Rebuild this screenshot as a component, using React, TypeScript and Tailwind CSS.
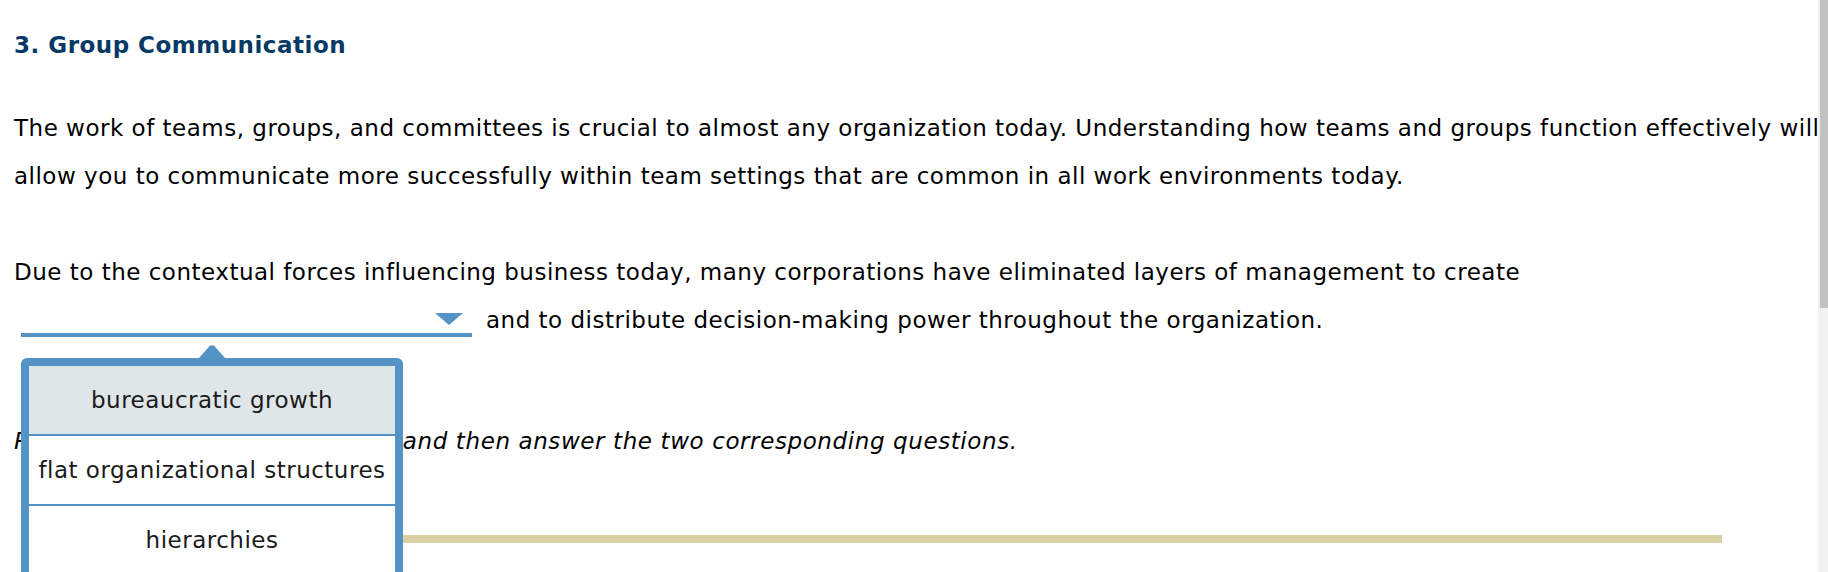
const BLUE = '#5393c5';

const OPTIONS = ['bureaucratic growth', 'flat organizational structures', 'hierarchies'];

function Dropdown() {
  return (
    <div className="absolute left-[21px] top-[344px] w-[382px]">
      <svg width="26" height="14" viewBox="0 0 26 14" className="ml-[178px] block">
        <polygon points="0,14 11,1.5 15,1.5 26,14" fill={BLUE} />
      </svg>
      <div className="rounded-[6px] border-[8px] border-[#5393c5] bg-white">
        {OPTIONS.map((o, i) => (
          <div
            key={o}
            className={
              i === 0
                ? 'flex h-[68px] items-center justify-center bg-[#dfe6e9] text-[23px] tracking-[0.5px] text-[#1a1a1a]'
                : 'flex h-[70px] items-center justify-center border-t-2 border-[#5393c5] text-[23px] tracking-[0.5px] text-[#1a1a1a]'
            }
          >
            {o}
          </div>
        ))}
      </div>
    </div>
  );
}

export default function App() {
  return (
    <div
      className="flex h-[572px] w-[1828px] overflow-hidden bg-white text-black"
      style={{ fontFamily: '"DejaVu Sans", Verdana, sans-serif' }}
    >
      <main className="relative flex-1 overflow-hidden pl-[14px] pt-[21px] text-[23px] tracking-[0.5px]">
        <h2 className="whitespace-nowrap font-bold leading-[48px] text-[#063966]">
          3. Group Communication
        </h2>

        <div className="mt-[35px] leading-[48px] whitespace-nowrap">
          <div>
            The work of teams, groups, and committees is crucial to almost any organization today. Understanding how teams and groups function effectively will
          </div>
          <div>
            allow you to communicate more successfully within team settings that are common in all work environments today.
          </div>
        </div>

        <div className="mt-[48px] leading-[48px] whitespace-nowrap">
          <div>
            Due to the contextual forces influencing business today, many corporations have eliminated layers of management to create
          </div>
          <div className="flex h-[48px] items-start">
            <div className="ml-[7px] flex h-[41px] w-[451px] items-end justify-end border-b-4 border-[#5393c5] pb-[8px] pr-[9px]">
              <svg width="28" height="12" viewBox="0 0 28 12" className="block">
                <polygon points="0,0 28,0 14,12" fill={BLUE} />
              </svg>
            </div>
            <span className="ml-[14px]">and to distribute decision-making power throughout the organization.</span>
          </div>
        </div>

        <p className="mt-[73px] whitespace-nowrap italic leading-[48px] tracking-[0.6px]">
          Read the following information, and then answer the two corresponding questions.
        </p>

        <div className="ml-[46px] mt-[70px] h-[8px] w-[1662px] bg-[#dbcfa4]" />

        <Dropdown />
      </main>

      <div className="flex w-[10px] flex-col items-end bg-[#f1f1f1]">
        <div className="h-[308px] w-[8px] bg-[#c1c1c1]" />
      </div>
    </div>
  );
}
